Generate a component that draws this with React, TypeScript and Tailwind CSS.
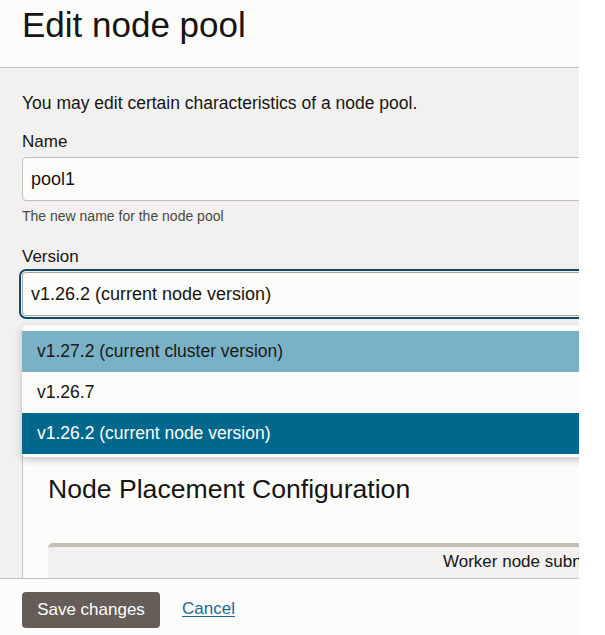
// EditNodePoolPanel — side panel for editing a node pool, with the version
// select opened over the placement configuration card.

const FONT = "'Liberation Sans', Arial, sans-serif";

interface VersionOption {
  label: string;
  state: "hover" | "plain" | "selected";
}

const VERSIONS: VersionOption[] = [
  { label: "v1.27.2 (current cluster version)", state: "hover" },
  { label: "v1.26.7", state: "plain" },
  { label: "v1.26.2 (current node version)", state: "selected" },
];

const ROW_STYLES: Record<VersionOption["state"], string> = {
  hover: "bg-[#79b1c6] text-[#1c1a18]",
  plain: "bg-[#fcfcfb] text-[#161513]",
  selected: "bg-[#00688c] text-white",
};

export default function App() {
  return (
    <div className="h-[635px] w-[605px] overflow-hidden bg-white" style={{ fontFamily: FONT }}>
      <div className="flex h-[635px] w-[579px] flex-col overflow-hidden text-[#161513]">
        {/* Header */}
        <div className="h-[68px] shrink-0 border-b border-[#c7c3be] bg-[#fcfcfb] px-[22px] pt-[7px]">
          <h1 className="text-[35px] leading-[35px] font-normal">Edit node pool</h1>
        </div>

        {/* Body */}
        <div className="relative min-h-0 flex-1 overflow-hidden bg-[#f2f1ef] pl-[22px] pt-[25px]">
          <p className="text-[17.5px] leading-[21px]">You may edit certain characteristics of a node pool.</p>

          <label className="mt-[18px] block text-[17px] leading-[20px]">Name</label>
          <div className="mt-[5px] flex h-[44px] w-[600px] items-center rounded-[4px] border border-[#c2beb9] bg-[#fcfcfb] pl-[8px] text-[18px]">
            pool1
          </div>
          <p className="mt-[7px] text-[14px] leading-[17px] text-[#4b4845]">The new name for the node pool</p>

          <label className="mt-[22px] block text-[17px] leading-[20px]">Version</label>
          <div className="mt-[5px] flex h-[44px] w-[600px] items-center rounded-[4px] border border-[#a9a49e] bg-[#fcfcfb] pl-[8px] text-[18px] outline-2 outline-offset-1 outline-[#0e4c66]">
            v1.26.2 (current node version)
          </div>

          {/* Node placement card */}
          <div className="mt-[9px] w-[620px] rounded-tl-[4px] border-t border-l border-[#c7c3be] bg-[#fcfcfb] pl-[25px] pt-[147px]">
            <h2 className="text-[26.6px] leading-[32px] font-normal">Node Placement Configuration</h2>
            <div className="mt-[38px] h-[60px] rounded-t-[5px] border-t-4 border-[#c4beb8] bg-[#f2f1ef] pt-[5px] pl-[395px] text-[17px] leading-[20px]">
              Worker node subnet
            </div>
          </div>

          {/* Open dropdown */}
          <div className="absolute top-[257px] left-[22px] w-[600px] rounded-[4px] bg-[#fcfcfb] pt-[6px] pb-[3px] shadow-[0_3px_8px_rgba(0,0,0,0.22)]">
            {VERSIONS.map((v) => (
              <div
                key={v.label}
                className={`flex h-[41px] items-center pl-[15px] text-[17.5px] ${ROW_STYLES[v.state]}`}
              >
                {v.label}
              </div>
            ))}
          </div>
        </div>

        {/* Footer */}
        <div className="flex h-[57px] shrink-0 items-start gap-[22px] border-t border-[#c7c3be] bg-[#fcfcfb] px-[22px] pt-[13px]">
          <button
            type="button"
            className="h-[36px] w-[138px] rounded-[4px] bg-[#665d58] text-[17px] text-white"
          >
            Save changes
          </button>
          <a href="#" className="mt-[7px] text-[17px] leading-[20px] text-[#1a6a92] underline underline-offset-2">
            Cancel
          </a>
        </div>
      </div>
    </div>
  );
}
